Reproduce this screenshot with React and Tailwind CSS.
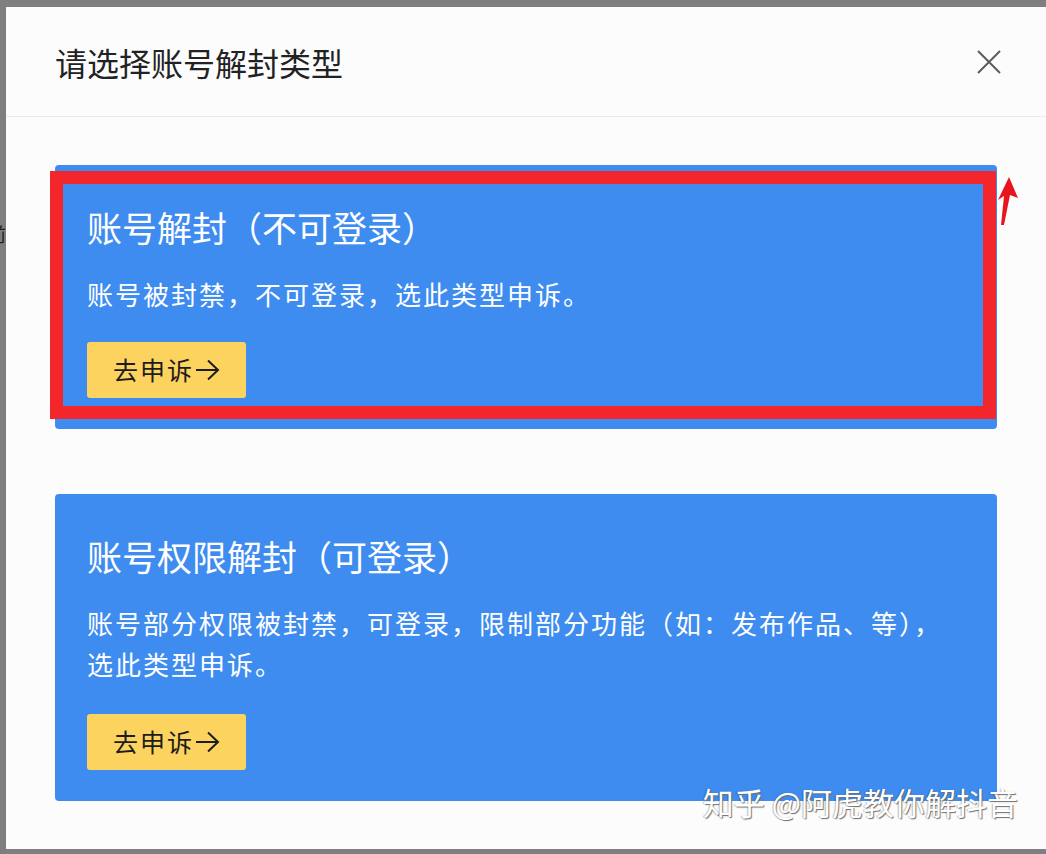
import React from 'react'

const cards = [
  {
    title: '账号解封（不可登录）',
    lines: ['账号被封禁，不可登录，选此类型申诉。'],
    highlighted: true,
  },
  {
    title: '账号权限解封（可登录）',
    lines: ['账号部分权限被封禁，可登录，限制部分功能（如：发布作品、等），', '选此类型申诉。'],
    highlighted: false,
  },
]

function CloseIcon() {
  return (
    <svg width="24" height="24" viewBox="0 0 24 24" className="shrink-0">
      <path d="M1 1 L23 23 M23 1 L1 23" stroke="#5c5c5c" strokeWidth="2" fill="none" />
    </svg>
  )
}

function ArrowIcon() {
  return (
    <svg width="25" height="22" viewBox="0 0 25 22" className="ml-[1px]">
      <path d="M1 11 H23 M13 1.5 L23 11 L13 20.5" stroke="#1c1c1c" strokeWidth="2" fill="none" />
    </svg>
  )
}

function AppealCard({ card }) {
  return (
    <div className="relative rounded-[4px] bg-[#3e8cf0] pl-[32px] pr-6 pt-[40px] pb-[31px]">
      <div className="text-[35px] leading-[44px] text-white">{card.title}</div>
      <div className="mt-[24px] text-[26px] leading-[41px] tracking-[2px] text-white">
        {card.lines.map((l) => (
          <div key={l}>{l}</div>
        ))}
      </div>
      <button
        className={
          'flex h-[56px] w-[159px] items-center justify-center rounded-[3px] bg-[#fdd360] text-[25px] tracking-[2px] text-[#1c1c1c] ' +
          (card.highlighted ? 'mt-[28px]' : 'mt-[30px]')
        }
      >
        <span>去申诉</span>
        <ArrowIcon />
      </button>

      {card.highlighted && (
        <>
          {/* red annotation box drawn over the card */}
          <div className="pointer-events-none absolute left-[-5px] top-[6px] h-[248px] w-[946px] border-[13px] border-[#f2262b]" />
          <svg
            className="pointer-events-none absolute left-[941px] top-[10px]"
            width="24"
            height="54"
            viewBox="0 0 24 54"
          >
            <polygon points="13,2 22,23 14,20 8,50 5,50 8,21 2,25" fill="#e8161c" />
          </svg>
        </>
      )}
    </div>
  )
}

export default function App() {
  return (
    <div className="relative h-[854px] w-[1046px] overflow-hidden bg-[#7f7f7f] pt-[7px] pb-[5px] pl-[6px] font-['Noto_Sans_CJK_SC','Noto_Sans',sans-serif]">
      {/* sliver of the page behind the dialog */}
      <span className="absolute left-[-13px] top-[220px] text-[19px] text-[#1e1e1e]">前</span>

      <div className="relative z-10 flex h-full flex-col bg-[#fcfcfd]">
        <div className="flex h-[110px] shrink-0 items-center justify-between border-b border-[#ebebeb] pl-[49px] pr-[45px]">
          <div className="text-[32px] text-[#222222]">请选择账号解封类型</div>
          <CloseIcon />
        </div>

        <div className="flex flex-col gap-[65px] px-[49px] pt-[48px]">
          {cards.map((c) => (
            <AppealCard key={c.title} card={c} />
          ))}
        </div>

        <div className="pointer-events-none absolute right-[28px] bottom-[24px] text-[31px] text-white [text-shadow:1px_1px_1px_#6f6f6f,-1px_0_1px_rgba(0,0,0,0.25)]">
          知乎 @阿虎教你解抖音
        </div>
      </div>
    </div>
  )
}
